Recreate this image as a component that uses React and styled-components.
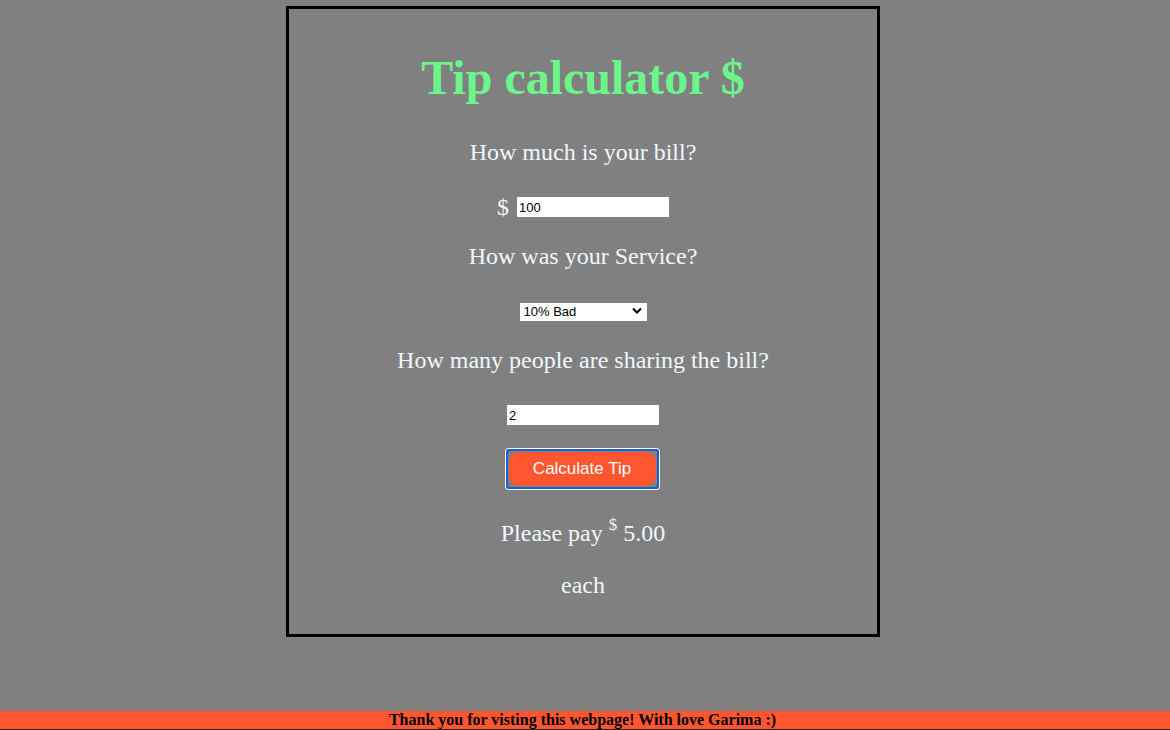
import styled, { createGlobalStyle } from 'styled-components'
import { useState } from 'react'

const GlobalStyle = createGlobalStyle`
  html, body {
    margin: 0;
    padding: 0;
    background: #808080;
  }
  body {
    font-family: "Liberation Serif", "Times New Roman", serif;
  }
`

const Page = styled.div`
  min-height: 100vh;
  display: flex;
  flex-direction: column;
  align-items: center;
`

const Card = styled.div`
  width: 588px;
  margin-top: 6px;
  margin-left: -4px;
  border: 3px solid #000;
  padding: 41px 0 35px;
  display: flex;
  flex-direction: column;
  align-items: center;
  color: #f0f8ff;
`

const Row = styled.div`
  height: ${p => p.$h}px;
  margin-top: ${p => p.$mt || 0}px;
  display: flex;
  align-items: center;
  justify-content: center;
  gap: ${p => p.$gap || 0}px;
`

const Title = styled.h1`
  margin: 0;
  font-size: 48px;
  font-weight: bold;
  color: #6cf58b;
  line-height: 1;
`

const Question = styled.p`
  margin: 0;
  font-size: 24px;
  line-height: 1;
`

const Dollar = styled.span`
  font-size: 24px;
`

const TextInput = styled.input`
  width: 152px;
  height: 20px;
  box-sizing: border-box;
  border: none;
  padding: 1px 2px;
  font-family: "Liberation Sans", Arial, sans-serif;
  font-size: 13px;
  color: #000;
  background: #fff;
  outline: none;
`

const SelectWrap = styled.div`
  position: relative;
  width: 127px;
  height: 18px;
`

const Select = styled.select`
  appearance: none;
  width: 100%;
  height: 100%;
  border: none;
  border-radius: 0;
  background: #fff;
  padding: 0 0 0 4px;
  font-family: "Liberation Sans", Arial, sans-serif;
  font-size: 13px;
  color: #000;
  outline: none;
`

const Chevron = styled.svg`
  position: absolute;
  right: 5px;
  top: 5px;
  pointer-events: none;
`

const FocusRing = styled.span`
  display: inline-flex;
  padding: 1px;
  margin-left: -2px;
  border: 2px solid #1a5fd6;
  border-radius: 3px;
  box-shadow: 0 0 0 1px #fff;
`

const Button = styled.button`
  width: 147px;
  height: 34px;
  padding: 0;
  border: none;
  border-radius: 10px;
  background: #ff5630;
  color: #fff;
  font-family: "Liberation Sans", Arial, sans-serif;
  font-size: 17px;
  cursor: pointer;
  outline: none;
`

const Result = styled.p`
  margin: 0;
  font-size: 24px;
  line-height: 1;

  sup {
    font-size: 17px;
    position: relative;
    top: -2px;
  }
`

const Footer = styled.footer`
  margin-top: auto;
  width: 100%;
  height: 18px;
  background: #ff5630;
  border-bottom: 1px solid #222;
  text-align: center;
  font-weight: bold;
  font-size: 16px;
  line-height: 18px;
  color: #000;
  text-indent: -5px;
`

export default function App() {
  const [bill, setBill] = useState('100')
  const [service, setService] = useState('0.1')
  const [people, setPeople] = useState('2')
  const [tip, setTip] = useState('5.00')

  const calculate = () => {
    const each = (Number(bill) * Number(service)) / (Number(people) || 1)
    setTip(each.toFixed(2))
  }

  return (
    <Page>
      <GlobalStyle />
      <Card>
        <Row $h={56}>
          <Title>Tip calculator $</Title>
        </Row>
        <Row $h={28} $mt={32}>
          <Question>How much is your bill?</Question>
        </Row>
        <Row $h={24} $mt={29} $gap={8}>
          <Dollar>$</Dollar>
          <TextInput value={bill} onChange={e => setBill(e.target.value)} />
        </Row>
        <Row $h={28} $mt={23}>
          <Question>How was your Service?</Question>
        </Row>
        <Row $h={20} $mt={31}>
          <SelectWrap>
            <Select value={service} onChange={e => setService(e.target.value)}>
              <option value="0.3">30% Outstanding</option>
              <option value="0.2">20% Good</option>
              <option value="0.15">15% It was OK</option>
              <option value="0.1">10% Bad</option>
              <option value="0.05">5% Terrible</option>
            </Select>
            <Chevron width="10" height="7" viewBox="0 0 10 7">
              <path d="M1 1.5 L5 5.5 L9 1.5" fill="none" stroke="#000" strokeWidth="2" />
            </Chevron>
          </SelectWrap>
        </Row>
        <Row $h={28} $mt={25}>
          <Question>How many people are sharing the bill?</Question>
        </Row>
        <Row $h={22} $mt={30}>
          <TextInput value={people} onChange={e => setPeople(e.target.value)} />
        </Row>
        <Row $h={42} $mt={22}>
          <FocusRing>
            <Button onClick={calculate}>Calculate Tip</Button>
          </FocusRing>
        </Row>
        <Row $h={30} $mt={26}>
          <Result>
            Please pay <sup>$</sup> {tip}
          </Result>
        </Row>
        <Row $h={28} $mt={25}>
          <Question>each</Question>
        </Row>
      </Card>
      <Footer>Thank you for visting this webpage! With love Garima :)</Footer>
    </Page>
  )
}
